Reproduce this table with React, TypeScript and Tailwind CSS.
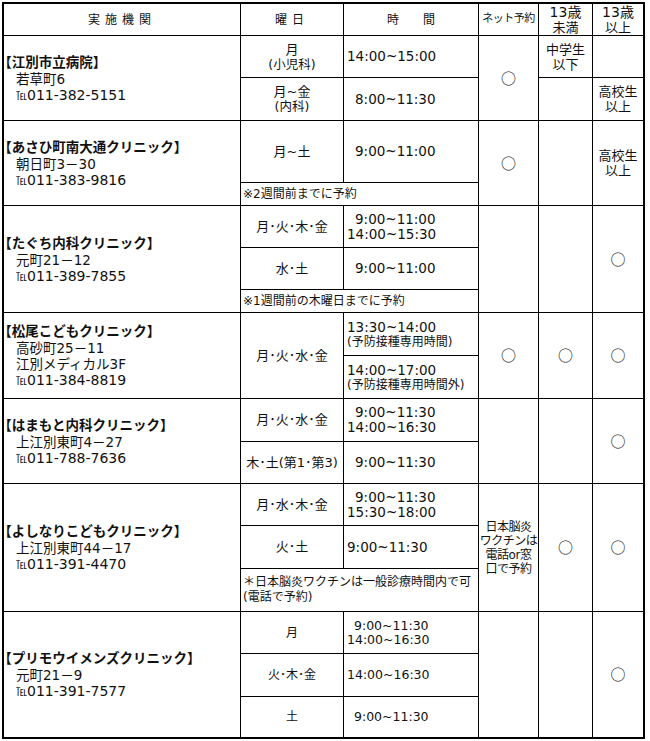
import React from "react";

const C = ({ className, children }: { className: string; children?: React.ReactNode }) => (
  <div className={"bg-white flex " + className}>{children}</div>
);

const Name = ({ name, lines, tel }: { name: string; lines: string[]; tel: string }) => (
  <div className="flex flex-col justify-center pl-[1px] text-[13px] leading-[16px]">
    <div className="font-bold text-[13.5px] leading-[17px]">
      <span className="[font-feature-settings:'halt']">【</span>
      {name}
      <span className="[font-feature-settings:'halt']">】</span>
    </div>
    {lines.map((l, i) => (
      <div key={i} className="pl-[11px] text-[13.5px]">{l}</div>
    ))}
    <div className="pl-[11px] text-[14px] leading-[16px] flex items-baseline">
      <span className="font-['Noto_Sans_CJK_JP'] text-[11px] tracking-[-1px] mr-[1px]">℡</span>
      <span>{tel}</span>
    </div>
  </div>
);

const Circle = () => <span className="font-['Noto_Sans_CJK_JP'] text-[15px]">○</span>;

export default function App() {
  return (
    <div className="bg-white w-[650px] h-[741px] pt-[2px] pl-[2px] font-['DejaVu_Sans','Noto_Sans_CJK_JP',sans-serif] text-[#111]">
      <div className="w-[643px] border-2 border-black bg-black">
        <div className="grid gap-px grid-cols-[236px_102px_134px_59px_53px_50px] grid-rows-[31px_41px_42px_61px_22px_41px_41px_22px_42px_42px_42px_41px_41px_42px_42px_41px_42px_40px]">
          {/* header */}
          <C className="col-start-1 row-start-1 items-center justify-center text-[12px] tracking-[5px]">実施機関</C>
          <C className="col-start-2 row-start-1 items-center justify-center text-[12px] tracking-[5px]">曜日</C>
          <C className="col-start-3 row-start-1 items-center justify-center text-[12px]">時　　間</C>
          <C className="col-start-4 row-start-1 items-center justify-center text-[11px] tracking-[-0.5px]">ネット予約</C>
          <C className="col-start-5 row-start-1 flex-col items-center justify-center text-[13px] leading-[15px]"><div className="text-[14px]">13歳</div><div>未満</div></C>
          <C className="col-start-6 row-start-1 flex-col items-center justify-center text-[13px] leading-[15px]"><div className="text-[14px]">13歳</div><div>以上</div></C>

          {/* 江別市立病院 */}
          <C className="col-start-1 row-start-2 row-span-2"><Name name="江別市立病院" lines={["若草町6"]} tel="011-382-5151" /></C>
          <C className="col-start-2 row-start-2 flex-col items-center justify-center text-[13px] leading-[15px]"><div>月</div><div className="text-[12.5px]">(小児科)</div></C>
          <C className="col-start-2 row-start-3 flex-col items-center justify-center text-[13px] leading-[15px]"><div>月~金</div><div className="text-[12.5px]">(内科)</div></C>
          <C className="col-start-3 row-start-2 items-center pl-[3px] text-[13.5px]">14:00~15:00</C>
          <C className="col-start-3 row-start-3 items-center pl-[11px] text-[13.5px]">8:00~11:30</C>
          <C className="col-start-4 row-start-2 row-span-2 items-center justify-center"><Circle /></C>
          <C className="col-start-5 row-start-2 flex-col items-center justify-center text-[13px] leading-[15px]"><div>中学生</div><div>以下</div></C>
          <C className="col-start-5 row-start-3" />
          <C className="col-start-6 row-start-2" />
          <C className="col-start-6 row-start-3 flex-col items-center justify-center text-[13px] leading-[15px]"><div>高校生</div><div>以上</div></C>

          {/* あさひ町南大通クリニック */}
          <C className="col-start-1 row-start-4 row-span-2"><Name name="あさひ町南大通クリニック" lines={["朝日町3－30"]} tel="011-383-9816" /></C>
          <C className="col-start-2 row-start-4 items-center justify-center text-[13px]">月~土</C>
          <C className="col-start-3 row-start-4 items-center pl-[11px] text-[13.5px]">9:00~11:00</C>
          <C className="col-start-2 col-span-2 row-start-5 items-center pl-[2px] text-[12px]">※2週間前までに予約</C>
          <C className="col-start-4 row-start-4 row-span-2 items-center justify-center"><Circle /></C>
          <C className="col-start-5 row-start-4 row-span-2" />
          <C className="col-start-6 row-start-4 row-span-2 flex-col items-center justify-center text-[13px] leading-[15px]"><div>高校生</div><div>以上</div></C>

          {/* たぐち内科クリニック */}
          <C className="col-start-1 row-start-6 row-span-3"><Name name="たぐち内科クリニック" lines={["元町21－12"]} tel="011-389-7855" /></C>
          <C className="col-start-2 row-start-6 items-center justify-center text-[13px]">月･火･木･金</C>
          <C className="col-start-3 row-start-6 flex-col justify-center pl-[3px] text-[13.5px] leading-[15px]"><div className="pl-[8px]">9:00~11:00</div><div>14:00~15:30</div></C>
          <C className="col-start-2 row-start-7 items-center justify-center text-[13px]">水･土</C>
          <C className="col-start-3 row-start-7 items-center pl-[11px] text-[13.5px]">9:00~11:00</C>
          <C className="col-start-2 col-span-2 row-start-8 items-center pl-[2px] text-[12px]">※1週間前の木曜日までに予約</C>
          <C className="col-start-4 row-start-6 row-span-3" />
          <C className="col-start-5 row-start-6 row-span-3" />
          <C className="col-start-6 row-start-6 row-span-3 items-center justify-center"><Circle /></C>

          {/* 松尾こどもクリニック */}
          <C className="col-start-1 row-start-9 row-span-2"><Name name="松尾こどもクリニック" lines={["高砂町25－11", "江別メディカル3F"]} tel="011-384-8819" /></C>
          <C className="col-start-2 row-start-9 row-span-2 items-center justify-center text-[13px]">月･火･水･金</C>
          <C className="col-start-3 row-start-9 flex-col justify-center pl-[3px] text-[13.5px] leading-[15px]"><div>13:30~14:00</div><div className="text-[12px] leading-[14px]">(予防接種専用時間)</div></C>
          <C className="col-start-3 row-start-10 flex-col justify-center pl-[3px] text-[13.5px] leading-[15px]"><div>14:00~17:00</div><div className="text-[12px] leading-[14px]">(予防接種専用時間外)</div></C>
          <C className="col-start-4 row-start-9 row-span-2 items-center justify-center"><Circle /></C>
          <C className="col-start-5 row-start-9 row-span-2 items-center justify-center"><Circle /></C>
          <C className="col-start-6 row-start-9 row-span-2 items-center justify-center"><Circle /></C>

          {/* はまもと内科クリニック */}
          <C className="col-start-1 row-start-11 row-span-2"><Name name="はまもと内科クリニック" lines={["上江別東町4－27"]} tel="011-788-7636" /></C>
          <C className="col-start-2 row-start-11 items-center justify-center text-[13px]">月･火･水･金</C>
          <C className="col-start-3 row-start-11 flex-col justify-center pl-[3px] text-[13.5px] leading-[15px]"><div className="pl-[8px]">9:00~11:30</div><div>14:00~16:30</div></C>
          <C className="col-start-2 row-start-12 items-center justify-center text-[13px]">木･土(第1･第3)</C>
          <C className="col-start-3 row-start-12 items-center pl-[11px] text-[13.5px]">9:00~11:30</C>
          <C className="col-start-4 row-start-11 row-span-2" />
          <C className="col-start-5 row-start-11 row-span-2" />
          <C className="col-start-6 row-start-11 row-span-2 items-center justify-center"><Circle /></C>

          {/* よしなりこどもクリニック */}
          <C className="col-start-1 row-start-13 row-span-3"><Name name="よしなりこどもクリニック" lines={["上江別東町44－17"]} tel="011-391-4470" /></C>
          <C className="col-start-2 row-start-13 items-center justify-center text-[13px]">月･水･木･金</C>
          <C className="col-start-3 row-start-13 flex-col justify-center pl-[3px] text-[13.5px] leading-[15px]"><div className="pl-[8px]">9:00~11:30</div><div>15:30~18:00</div></C>
          <C className="col-start-2 row-start-14 items-center justify-center text-[13px]">火･土</C>
          <C className="col-start-3 row-start-14 items-center pl-[3px] text-[13.5px]">9:00~11:30</C>
          <C className="col-start-2 col-span-2 row-start-15 flex-col justify-center pl-[2px] text-[12px] leading-[15px]"><div>＊日本脳炎ワクチンは一般診療時間内で可</div><div>(電話で予約)</div></C>
          <C className="col-start-4 row-start-13 row-span-3 flex-col items-center justify-center text-[12px] leading-[14px] tracking-[-0.5px]"><div>日本脳炎</div><div>ワクチンは</div><div>電話or窓</div><div>口で予約</div></C>
          <C className="col-start-5 row-start-13 row-span-3 items-center justify-center"><Circle /></C>
          <C className="col-start-6 row-start-13 row-span-3 items-center justify-center"><Circle /></C>

          {/* プリモウイメンズクリニック */}
          <C className="col-start-1 row-start-16 row-span-3"><Name name="プリモウイメンズクリニック" lines={["元町21－9"]} tel="011-391-7577" /></C>
          <C className="col-start-2 row-start-16 items-center justify-center text-[12px]">月</C>
          <C className="col-start-3 row-start-16 flex-col justify-center pl-[3px] text-[12.5px] leading-[14px]"><div className="pl-[7px]">9:00~11:30</div><div>14:00~16:30</div></C>
          <C className="col-start-2 row-start-17 items-center justify-center text-[12px]">火･木･金</C>
          <C className="col-start-3 row-start-17 items-center pl-[3px] text-[12.5px]">14:00~16:30</C>
          <C className="col-start-2 row-start-18 items-center justify-center text-[12px]">土</C>
          <C className="col-start-3 row-start-18 items-center pl-[10px] text-[12.5px]">9:00~11:30</C>
          <C className="col-start-4 row-start-16 row-span-3" />
          <C className="col-start-5 row-start-16 row-span-3" />
          <C className="col-start-6 row-start-16 row-span-3 items-center justify-center"><Circle /></C>
        </div>
      </div>
    </div>
  );
}
